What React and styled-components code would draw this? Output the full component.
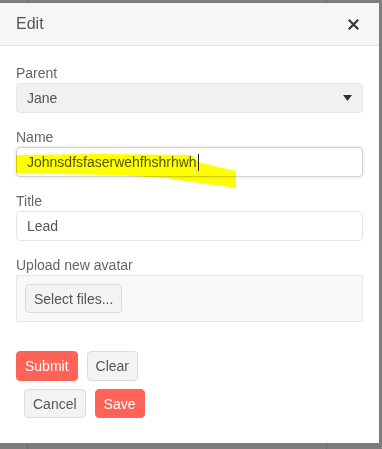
import styled, { createGlobalStyle } from 'styled-components';

const GlobalStyle = createGlobalStyle`
  html, body {
    margin: 0;
    padding: 0;
    background: #7d7d7d;
    font-family: 'Liberation Sans', Arimo, Arial, sans-serif;
  }
`;

const Backdrop = styled.div`
  height: 449px;
  display: grid;
  grid-template-columns: 28px 299px 1fr;
  overflow: hidden;
`;

const Column = styled.div`
  border-right: ${(p) => (p.$last ? 'none' : '1px solid #6c6c6c')};
`;

const Modal = styled.section`
  position: absolute;
  top: 3px;
  left: 0;
  width: 379px;
  height: 440px;
  background: #fff;
  display: flex;
  flex-direction: column;
  color: #656565;
  font-size: 14px;
`;

const Header = styled.header`
  display: flex;
  align-items: center;
  justify-content: space-between;
  padding: 12px 20px 12px 16px;
  line-height: 18px;
  background: #f6f6f6;
  border-bottom: 1px solid #e1e1e1;
  font-size: 16px;
  color: #555;
`;

const Body = styled.div`
  padding: 17px 16px 0;
  display: flex;
  flex-direction: column;
`;

const Field = styled.div`
  position: relative;
  margin-bottom: 14px;
`;

const Label = styled.label`
  display: block;
  line-height: 20px;
  color: #656565;
`;

const Control = styled.div`
  box-sizing: border-box;
  height: 30px;
  display: flex;
  align-items: center;
  justify-content: space-between;
  padding: 0 10px;
  border: 1px solid ${(p) => (p.$focused ? '#d0d0d0' : '#e6e6e6')};
  border-radius: 4px;
  background: ${(p) => (p.$select ? '#f1f1f1' : '#fff')};
  box-shadow: ${(p) => (p.$focused ? '0 0 3px 1px rgba(0,0,0,0.08)' : 'none')};
  color: #555;
`;

const Typed = styled.span`
  display: flex;
  align-items: center;
`;

const Caret = styled.span`
  display: inline-block;
  width: 1px;
  height: 17px;
  background: #222;
  margin-left: 1px;
`;

const Highlight = styled.svg`
  position: absolute;
  left: 0;
  top: 20px;
  pointer-events: none;
  mix-blend-mode: multiply;
`;

const Upload = styled.div`
  box-sizing: border-box;
  height: 47px;
  padding: 8px;
  background: #f8f8f8;
  border: 1px solid #e8e8e8;
`;

const Button = styled.button`
  box-sizing: border-box;
  height: ${(p) => (p.$short ? 29 : 30)}px;
  padding: 0 8px;
  font: inherit;
  font-size: 14px;
  line-height: 20px;
  border-radius: 4px;
  border: 1px solid ${(p) => (p.$primary ? '#ff6358' : '#dcdcdc')};
  background: ${(p) => (p.$primary ? '#ff6358' : '#f3f3f3')};
  color: ${(p) => (p.$primary ? '#fff' : '#555')};
`;

const Actions = styled.div`
  display: flex;
  gap: 9px;
  padding-left: ${(p) => p.$indent || 0}px;
  margin-top: ${(p) => p.$top || 0}px;
`;

const CloseIcon = () => (
  <svg width="11" height="11" viewBox="0 0 11 11">
    <path d="M1.5 1.5 L9.5 9.5 M9.5 1.5 L1.5 9.5" stroke="#3a3a3a" strokeWidth="2.2" strokeLinecap="square" />
  </svg>
);

const DownArrow = () => (
  <svg width="9" height="6" viewBox="0 0 9 6">
    <path d="M0 0 H9 L4.5 6 Z" fill="#333" />
  </svg>
);

export default function App() {
  return (
    <>
      <GlobalStyle />
      <Backdrop>
        <Column />
        <Column />
        <Column $last />
      </Backdrop>
      <Modal>
        <Header>
          <span>Edit</span>
          <CloseIcon />
        </Header>
        <Body>
          <Field>
            <Label>Parent</Label>
            <Control $select>
              <span>Jane</span>
              <DownArrow />
            </Control>
          </Field>
          <Field>
            <Label>Name</Label>
            <Control $focused>
              <Typed>
                Johnsdfsfaserwehfhshrhwh
                <Caret />
              </Typed>
            </Control>
            <Highlight width="222" height="45" viewBox="0 0 222 45">
              <path
                d="M0 8 L80 7 L176 8 L182 15 L220 24 L220 41 L190 37 L150 31 L100 28 L40 27 L0 26 Z"
                fill="#ffff00"
              />
            </Highlight>
          </Field>
          <Field>
            <Label>Title</Label>
            <Control>
              <span>Lead</span>
            </Control>
          </Field>
          <Field>
            <Label>Upload new avatar</Label>
            <Upload>
              <Button $short>Select files...</Button>
            </Upload>
          </Field>
          <Actions $top={15}>
            <Button $primary>Submit</Button>
            <Button>Clear</Button>
          </Actions>
          <Actions $indent={8} $top={8}>
            <Button $short>Cancel</Button>
            <Button $primary $short>Save</Button>
          </Actions>
        </Body>
      </Modal>
    </>
  );
}
